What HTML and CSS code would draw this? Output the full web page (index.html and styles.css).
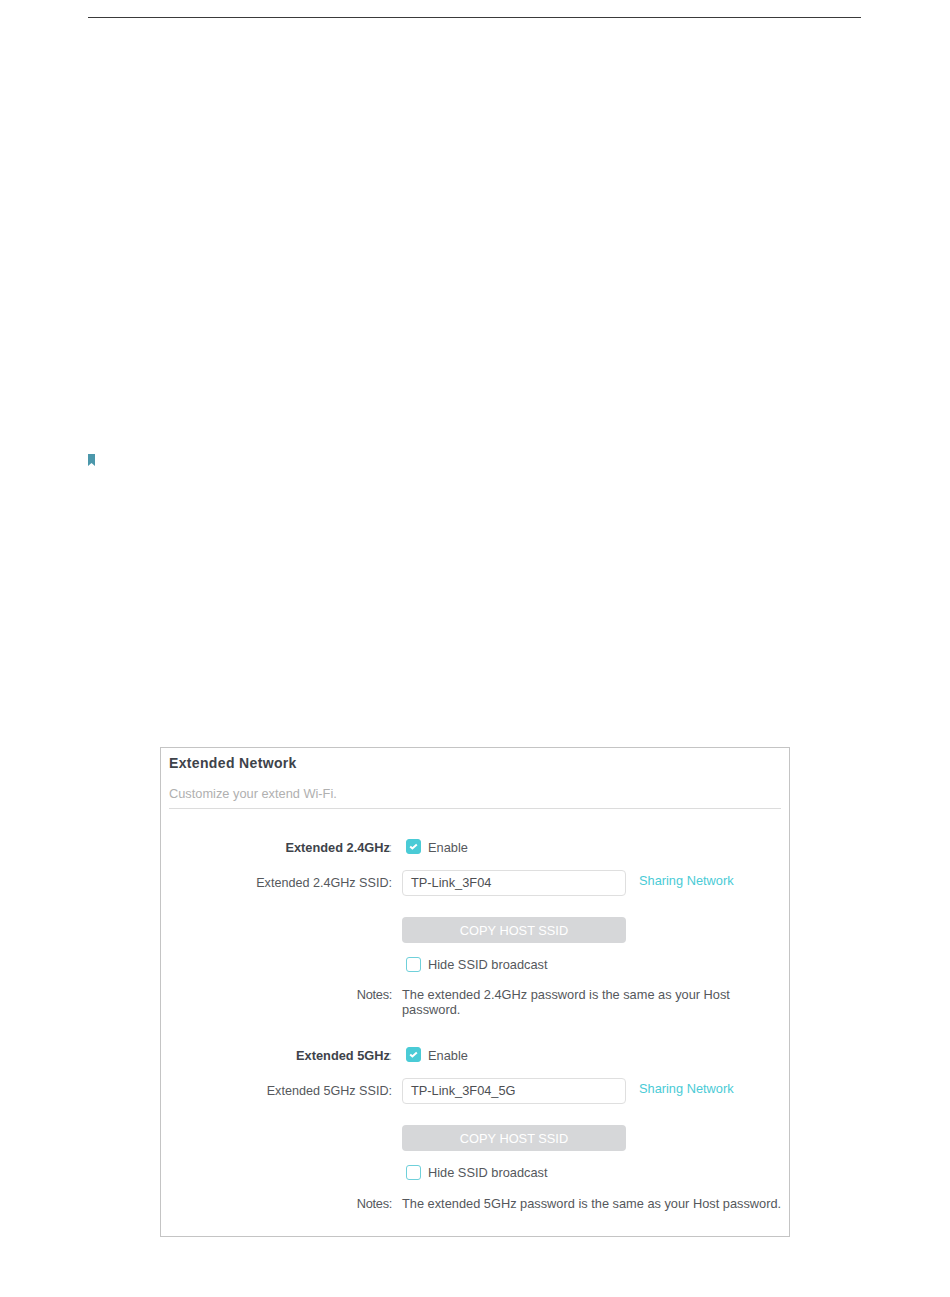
FILE: index.html
```html
<!DOCTYPE html>
<html lang="en">
<head>
<meta charset="utf-8">
<title>Extended Network</title>
<link rel="stylesheet" href="styles.css">
</head>
<body>
<div class="page">
  <div class="rule"></div>
  <svg class="bookmark" width="7" height="12" viewBox="0 0 7 12"><path d="M0 0H7V12L3.5 9L0 12Z" fill="#4b97ab"/></svg>
  <section class="panel">
    <h1 class="title">Extended Network</h1>
    <p class="subtitle">Customize your extend Wi-Fi.</p>
    <div class="form">
      <div class="row row-enable">
        <span class="label label-bold">Extended 2.4GHz<span class="colon">:</span></span>
        <label class="check"><span class="box box-on"><svg width="9" height="7" viewBox="0 0 9 7"><path d="M1.2 3.4L3.4 5.4L7.8 1.4" fill="none" stroke="#fff" stroke-width="2"/></svg></span>Enable</label>
      </div>
      <div class="row row-ssid">
        <span class="label">Extended 2.4GHz SSID:</span>
        <div class="field">TP-Link_3F04</div>
        <a class="share">Sharing Network</a>
      </div>
      <div class="row row-btn">
        <span></span>
        <div class="btn">COPY HOST SSID</div>
      </div>
      <div class="row row-hide">
        <span></span>
        <label class="check"><span class="box"></span>Hide SSID broadcast</label>
      </div>
      <div class="row row-notes">
        <span class="label label-notes">Notes:</span>
        <p class="note">The extended 2.4GHz password is the same as your Host password.</p>
      </div>

      <div class="row row-enable row-second">
        <span class="label label-bold">Extended 5GHz<span class="colon">:</span></span>
        <label class="check"><span class="box box-on"><svg width="9" height="7" viewBox="0 0 9 7"><path d="M1.2 3.4L3.4 5.4L7.8 1.4" fill="none" stroke="#fff" stroke-width="2"/></svg></span>Enable</label>
      </div>
      <div class="row row-ssid">
        <span class="label">Extended 5GHz SSID:</span>
        <div class="field">TP-Link_3F04_5G</div>
        <a class="share">Sharing Network</a>
      </div>
      <div class="row row-btn">
        <span></span>
        <div class="btn">COPY HOST SSID</div>
      </div>
      <div class="row row-hide">
        <span></span>
        <label class="check"><span class="box"></span>Hide SSID broadcast</label>
      </div>
      <div class="row row-notes row-notes-last">
        <span class="label label-notes">Notes:</span>
        <p class="note note-single">The extended 5GHz password is the same as your Host password.</p>
      </div>
    </div>
  </section>
</div>
</body>
</html>
```
FILE: styles.css
```css
* { box-sizing: border-box; }
html, body { margin: 0; background: #fff; }
body { font-family: "Liberation Sans", Arial, sans-serif; font-size: 12px; color: #4d4f53; }
.page { width: 950px; height: 1297px; padding: 17px 89px 0 88px; overflow: hidden; }
.rule { height: 1px; background: #3a3a3a; }
.bookmark { display: block; margin-top: 436px; }
.panel { width: 630px; height: 490px; margin: 281px 0 0 72px; border: 1px solid #c4c4c4; padding: 0 8px; }
.title { margin: 0; padding-top: 7px; font-size: 14px; line-height: 17px; font-weight: 700; color: #3e434a; letter-spacing: 0.35px; }
.subtitle { margin: 0; padding-top: 14px; height: 37px; line-height: 16px; font-size: 12.8px; color: #b0b0b0; border-bottom: 1px solid #dcdcdc; }
.form { padding-top: 28px; }
.row { display: grid; grid-template-columns: 223px auto auto; column-gap: 10px; justify-content: start; align-items: center; }
.label { text-align: right; font-size: 12.6px; color: #55585c; }
.label-bold { font-size: 12.8px; font-weight: 700; color: #3e434a; }
.label-notes { font-size: 12.8px; line-height: 15px; letter-spacing: -0.3px; }
.colon { margin-left: -1.5px; font-weight: 400; color: #aaa; }
.check { display: flex; align-items: center; gap: 7px; padding-left: 4px; font-size: 12.8px; color: #55585c; }
.box { display: flex; align-items: center; justify-content: center; width: 15px; height: 15px; border: 1px solid #6fd0da; border-radius: 3px; background: #fff; }
.box-on { margin-top: -1px; background: #4acbd6; border-color: #4acbd6; }
.row-enable { height: 20px; }
.row-second { margin-top: 28px; }
.row-ssid { height: 26px; margin-top: 13px; }
.field { width: 224px; height: 26px; padding-left: 8px; line-height: 24px; border: 1px solid #dfdfdf; border-radius: 4px; font-size: 12.8px; color: #4d4f53; }
.share { margin: -5px 0 0 3px; font-size: 12.8px; color: #4acbd6; }
.row-btn { height: 26px; margin-top: 21px; }
.btn { width: 224px; height: 26px; line-height: 27px; text-align: center; background: #d6d7d9; border-radius: 4px; color: #fff; font-size: 12.8px; }
.row-hide { height: 20px; margin-top: 11px; }
.row-notes { margin-top: 13px; align-items: start; }
.row-notes-last { margin-top: 14px; }
.note { margin: 0; width: 379px; font-size: 12.8px; line-height: 15px; color: #55585c; }
.note-single { white-space: nowrap; }
```
